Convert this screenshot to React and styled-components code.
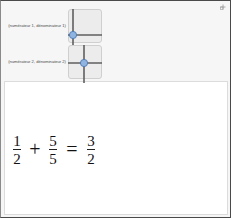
import React from "react";
import styled, { createGlobalStyle } from "styled-components";

const Global = createGlobalStyle`
  html, body { margin: 0; padding: 0; background: #ffffff; }
  * { box-sizing: border-box; }
`;

const Frame = styled.div`
  width: 231px;
  height: 218px;
  border: 1px solid #4a4a4a;
  border-left-color: #8a8a8a;
  background: #f6f6f6;
  display: flex;
  flex-direction: column;
  padding: 8px 2px 2px 3px;
  position: relative;
`;

const Corner = styled.svg`
  position: absolute;
  top: 3px;
  right: 4px;
`;

const Controls = styled.div`
  display: flex;
  flex-direction: column;
  gap: 2px;
  padding-left: 2px;
  height: 72px;
`;

const Row = styled.div`
  display: flex;
  align-items: flex-start;
  gap: 2px;
`;

const Label = styled.div`
  width: 60px;
  text-align: right;
  font-family: "Liberation Sans", Arial, sans-serif;
  font-size: 4.1px;
  color: #4a4a4a;
  white-space: nowrap;
  margin-top: ${({ $mt }) => $mt}px;
`;

const Pad = styled.div`
  width: 34px;
  height: 34px;
  border: 1px solid #cfcfcf;
  border-radius: 3px;
  background: #ececec;
  position: relative;
`;

const Output = styled.div`
  flex: 1;
  background: #ffffff;
  border: 1px solid #dcdcdc;
  display: flex;
  align-items: center;
  padding-left: 8px;
  padding-top: 3px;
`;

const Formula = styled.div`
  display: flex;
  align-items: center;
  font-family: "Liberation Serif", "Times New Roman", serif;
  color: #111;
`;

const Frac = styled.div`
  display: inline-flex;
  flex-direction: column;
  align-items: center;
  font-size: 15px;
  line-height: 12px;
  width: 8px;
`;

const Bar = styled.div`
  width: 8px;
  height: 1px;
  background: #222;
  margin: 2px 0 3px;
`;

const Op = styled.div`
  font-size: 20px;
  line-height: 20px;
  width: ${({ $w }) => $w}px;
  text-align: center;
  margin-top: -1px;
`;

const SliderPad = ({ x, y }) => (
  <Pad>
    <svg width="34" height="40" viewBox="0 0 34 40" style={{ position: "absolute", left: -1, top: -1 }}>
      <line x1={x} y1="0" x2={x} y2="38" stroke="#5f5f5f" strokeWidth="1.6" />
      <line x1="0" y1={y} x2="34" y2={y} stroke="#5f5f5f" strokeWidth="1.6" />
      <circle cx={x} cy={y} r="3.6" fill="#8fb4e0" stroke="#4d78b2" strokeWidth="0.9" />
    </svg>
  </Pad>
);

const Fraction = ({ n, d }) => (
  <Frac>
    <span>{n}</span>
    <Bar />
    <span>{d}</span>
  </Frac>
);

export default function App() {
  return (
    <>
      <Global />
      <Frame>
        <Corner width="6" height="6" viewBox="0 0 6 6">
          <path d="M3 0.5V5.5M0.5 3H5.5" stroke="#9a9a9a" strokeWidth="0.8" />
          <rect x="0.5" y="3" width="2.5" height="2.5" fill="none" stroke="#9a9a9a" strokeWidth="0.6" />
        </Corner>
        <Controls>
          <Row>
            <Label $mt={14}>(numérateur 1, dénominateur 1)</Label>
            <SliderPad x={5} y={26} />
          </Row>
          <Row>
            <Label $mt={14}>(numérateur 2, dénominateur 2)</Label>
            <SliderPad x={16} y={18} />
          </Row>
        </Controls>
        <Output>
          <Formula>
            <Fraction n="1" d="2" />
            <Op $w={28}>+</Op>
            <Fraction n="5" d="5" />
            <Op $w={30}>=</Op>
            <Fraction n="3" d="2" />
          </Formula>
        </Output>
      </Frame>
    </>
  );
}
